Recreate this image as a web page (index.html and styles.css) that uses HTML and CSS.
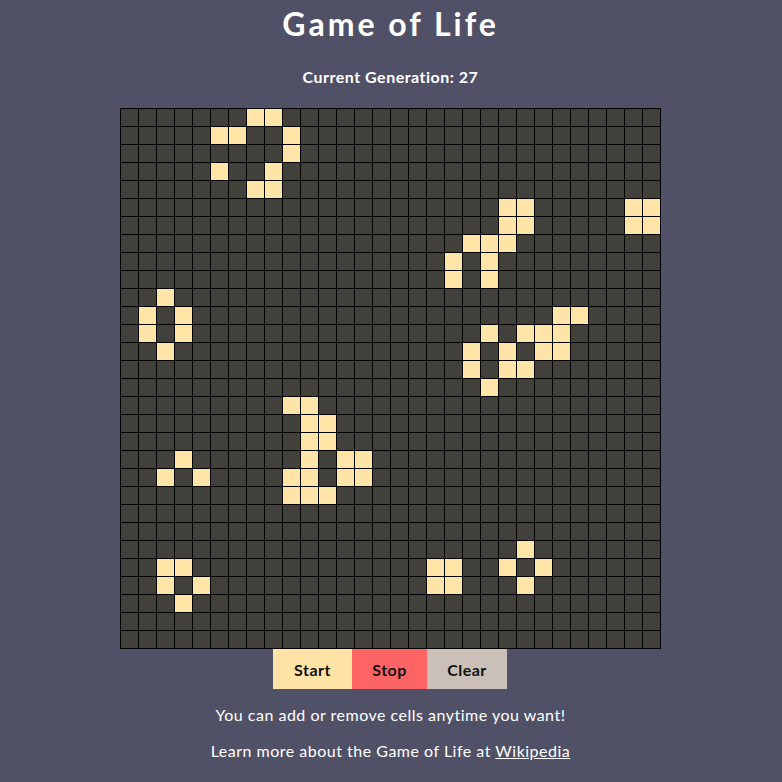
FILE: index.html
```html
<!DOCTYPE html>
<html lang="en">
<head>
<meta charset="utf-8">
<title>Game of Life</title>
<link rel="stylesheet" href="styles.css">
</head>
<body>
<main class="app">
  <h1 class="title">Game of Life</h1>
  <p class="generation">Current Generation: 27</p>
  <div class="grid" id="grid"></div>
  <div class="controls">
    <button class="btn btn-start">Start</button>
    <button class="btn btn-stop">Stop</button>
    <button class="btn btn-clear">Clear</button>
  </div>
  <p class="note">You can add or remove cells anytime you want!</p>
  <p class="note">Learn more about the Game of Life at <a class="link" href="#">Wikipedia</a></p>
</main>
<script src="game.js"></script>
</body>
</html>
```
FILE: styles.css
```css
body {
  margin: 0;
  background: #505166;
  font-family: Lato, "Noto Sans", sans-serif;
  color: #ffffff;
  letter-spacing: 0.5px;
}
.app {
  display: flex;
  flex-direction: column;
  align-items: center;
  padding-right: 1px;
}
.title {
  margin: 0;
  padding-top: 4px;
  font-size: 32px;
  font-weight: 700;
  letter-spacing: 3px;
  line-height: 40px;
}
.generation {
  margin: 23px 0 21px;
  font-size: 16px;
  font-weight: 700;
  line-height: 20px;
}
.grid {
  display: grid;
  grid-template-columns: repeat(30, 17px);
  grid-auto-rows: 17px;
  gap: 1px;
  padding: 1px;
  background: #000000;
}
.cell {
  background: #42403a;
}
.cell.alive {
  background: #ffe4a8;
}
.controls {
  display: flex;
  margin-right: 1px;
}
.btn {
  height: 40px;
  border: 0;
  padding: 0;
  font-family: Lato, "Noto Sans", sans-serif;
  font-size: 16px;
  font-weight: 700;
  letter-spacing: 0.5px;
  color: #111111;
}
.btn-start {
  width: 79px;
  background: #ffe3a6;
}
.btn-stop {
  width: 75px;
  background: #ff6464;
}
.btn-clear {
  width: 80px;
  background: #cbc0b8;
}
.note {
  margin: 16px 0 0;
  font-size: 16px;
  line-height: 20px;
}
.link {
  color: #ffffff;
}
```
FILE: game.js
```js
var live = {
  0: [7, 8],
  1: [5, 6, 9],
  2: [9],
  3: [5, 8],
  4: [7, 8],
  5: [21, 22, 28, 29],
  6: [21, 22, 28, 29],
  7: [19, 20, 21],
  8: [18, 20],
  9: [18, 20],
  10: [2],
  11: [1, 3, 24, 25],
  12: [1, 3, 20, 22, 23, 24],
  13: [2, 19, 21, 23, 24],
  14: [19, 21, 22],
  15: [20],
  16: [9, 10],
  17: [10, 11],
  18: [10, 11],
  19: [3, 10, 12, 13],
  20: [2, 4, 9, 10, 12, 13],
  21: [9, 10, 11],
  24: [22],
  25: [2, 3, 17, 18, 21, 23],
  26: [2, 4, 17, 18, 22],
  27: [3]
};
var grid = document.getElementById('grid');
for (var r = 0; r < 30; r++) {
  for (var c = 0; c < 30; c++) {
    var cell = document.createElement('div');
    cell.className = 'cell';
    if (live[r] && live[r].indexOf(c) !== -1) {
      cell.className += ' alive';
    }
    grid.appendChild(cell);
  }
}
```
